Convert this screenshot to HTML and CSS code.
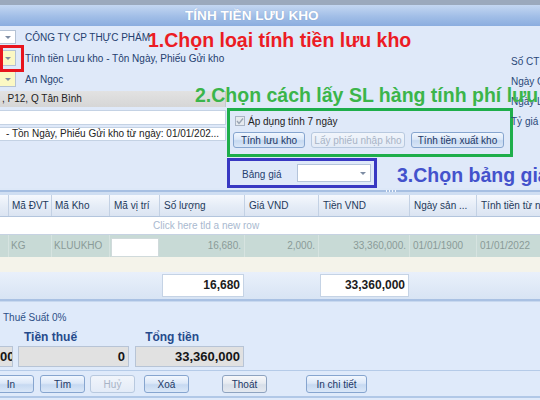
FILE: index.html
```html
<!DOCTYPE html>
<html lang="vi">
<head>
<meta charset="utf-8">
<title>Tính tiền lưu kho</title>
<link rel="stylesheet" href="styles.css">
</head>
<body>
<div class="window">
  <header class="titlebar"><h1>TÍNH TIỀN LƯU KHO</h1></header>

  <section class="form">
    <div class="form-left">
      <div class="lookup lookup-1"><span class="combo combo-white"><i class="caret"></i></span><span class="lookup-text">CÔNG TY CP THỰC PHẨM</span></div>
      <div class="lookup lookup-2"><span class="combo combo-yellow"><i class="caret"></i></span><span class="lookup-text">Tính tiền Lưu kho - Tôn Ngày, Phiếu Gửi kho</span></div>
      <div class="lookup lookup-3"><span class="combo combo-yellow"><i class="caret"></i></span><span class="lookup-text">An Ngọc</span></div>
      <div class="address">, P12, Q Tân Bình</div>
      <div class="textbox tb-1"></div>
      <div class="textbox tb-2">- Tồn Ngày, Phiếu Gửi kho từ ngày: 01/01/202...</div>
    </div>

    <div class="form-mid">
      <div class="box-green">
        <div class="check">
          <span class="checkbox"><svg width="8" height="8" viewBox="0 0 8 8"><polyline points="1,4 3,6.5 7,1.5" fill="none" stroke="#9aa5b4" stroke-width="1.4"/></svg></span>
          <span>Áp dụng tính 7 ngày</span>
        </div>
        <div class="btn-row">
          <button class="btn w-luu">Tính lưu kho</button>
          <button class="btn btn-disabled w-lay">Lấy phiếu nhập kho</button>
          <button class="btn w-xuat">Tính tiền xuất kho</button>
        </div>
      </div>
      <div class="box-blue">
        <span class="price-label">Bảng giá</span>
        <span class="combo-price"><i class="caret"></i></span>
      </div>
    </div>

    <div class="form-right">
      <div class="side-label">Số CT</div>
      <div class="side-label">Ngày CT</div>
      <div class="side-label">Ngày Lập</div>
      <div class="side-label">Tỷ giá</div>
    </div>

    <div class="red-box"></div>
    <div class="note note-red">1.Chọn loại tính tiền lưu kho</div>
    <div class="note note-green">2.Chọn cách lấy SL hàng tính phí lưu kho</div>
    <div class="note note-blue">3.Chọn bảng giá</div>
  </section>

  <div class="splitter"><span class="grip"></span></div>

  <section class="grid">
    <div class="grid-row grid-head">
      <div class="hc"></div>
      <div class="hc">Mã ĐVT</div>
      <div class="hc">Mã Kho</div>
      <div class="hc">Mã vị trí</div>
      <div class="hc">Số lượng</div>
      <div class="hc">Giá VND</div>
      <div class="hc">Tiền VND</div>
      <div class="hc">Ngày sản ...</div>
      <div class="hc">Tính tiền từ ngày</div>
    </div>
    <div class="new-row">Click here tld a new row</div>
    <div class="grid-row data-row">
      <div class="dc"></div>
      <div class="dc">KG</div>
      <div class="dc">KLUUKHO</div>
      <div class="dc dc-white"></div>
      <div class="dc num">16,680.</div>
      <div class="dc num">2,000.</div>
      <div class="dc num">33,360,000.</div>
      <div class="dc date">01/01/1900</div>
      <div class="dc date">01/01/2022</div>
    </div>
    <div class="grid-fill"></div>
  </section>

  <div class="grid-row totals">
    <div></div><div></div><div></div><div></div>
    <div class="tot-box">16,680</div>
    <div></div>
    <div class="tot-box">33,360,000</div>
    <div></div><div></div>
  </div>

  <section class="footer">
    <div class="tax">Thuế Suất 0%</div>
    <div class="sum-labels">
      <span class="sum-label l-thue">Tiền thuế</span>
      <span class="sum-label l-tong">Tổng tiền</span>
    </div>
    <div class="sum-boxes">
      <div class="sum-box s-1">00</div>
      <div class="sum-box s-2">0</div>
      <div class="sum-box s-3">33,360,000</div>
    </div>
    <div class="actions">
      <button class="btn act b-in">In</button>
      <button class="btn act b-tim">Tìm</button>
      <button class="btn act btn-disabled b-huy">Huỷ</button>
      <button class="btn act b-xoa">Xoá</button>
      <button class="btn act btn-gray b-thoat">Thoát</button>
      <button class="btn act b-inct">In chi tiết</button>
    </div>
    <div class="bottom-line"></div>
  </section>
</div>
</body>
</html>
```

FILE: styles.css
```css
* { box-sizing: border-box; }
html, body { margin: 0; padding: 0; }
body {
  width: 540px;
  height: 400px;
  overflow: hidden;
  background: #dfe9f9;
  font-family: "Liberation Sans", Arial, sans-serif;
  font-size: 10px;
  color: #1e1e1e;
}
.window { width: 540px; height: 400px; display: flex; flex-direction: column; overflow: hidden; }

/* title */
.titlebar {
  height: 26px;
  flex: none;
  border-top: 5px solid #9ba9bd;
  background: linear-gradient(#c4d7f2, #a1bee7 55%, #8badDf);
  display: flex;
  align-items: center;
  padding-left: 185px;
}
.titlebar h1 { margin: 0; font-size: 13.6px; font-weight: bold; color: #fff; letter-spacing: 0; text-shadow: 0 0 1px rgba(60,90,140,.35); }

/* form */
.form { position: relative; height: 162px; flex: none; display: flex; }
.form-left { width: 226px; flex: none; display: flex; flex-direction: column; }
.lookup { display: flex; align-items: center; gap: 9px; color: #24406f; }
.lookup-1 { margin-top: 4px; height: 14px; }
.lookup-2 { margin-top: 6px; height: 16px; }
.lookup-3 { margin-top: 5px; height: 16px; }
.lookup-text { white-space: nowrap; }
.combo {
  width: 16px; height: 100%; flex: none;
  display: flex; align-items: center; justify-content: center;
  border: 1px solid #b4c2d4; border-left: none;
  padding-left: 1px;
}
.combo-white { background: #fff; }
.combo-yellow { background: #fbf8c4; }
.caret { display: block; width: 0; height: 0; border-left: 3px solid transparent; border-right: 3px solid transparent; border-top: 3px solid #7d8ca3; }
.address {
  margin-top: 4px; height: 16px; line-height: 16px;
  background: linear-gradient(#e2e2e2, #d6d6d6);
  border-right: 1px solid #c2c8d0;
  padding-left: 2px; color: #222; white-space: nowrap;
}
.textbox { background: #fff; border: 1px solid #c4d2e4; border-left: none; white-space: nowrap; overflow: hidden; color: #222; }
.tb-1 { margin-top: 3px; height: 15px; }
.tb-2 { margin-top: 2px; height: 14px; line-height: 12px; padding-left: 6px; }

.form-mid { width: 286px; flex: none; margin-left: 1px; padding-top: 82px; display: flex; flex-direction: column; }
.box-green { height: 49px; border: 3px solid #1eae4b; padding: 4px 0 0 3px; }
.check { display: flex; align-items: center; height: 12px; margin-left: 2px; gap: 3px; color: #222; }
.checkbox { width: 10px; height: 10px; border: 1px solid #aab5c5; background: #e6eaef; display: flex; align-items: center; justify-content: center; }
.btn-row { display: flex; gap: 6px; margin-top: 5px; }
.btn {
  height: 16px; padding: 0; margin: 0;
  font-family: inherit; font-size: 10px; color: #1d3866;
  border: 1px solid #86a5cf; border-radius: 3px;
  background: linear-gradient(#f2f7fe, #dce8f8 45%, #c6d9f1 55%, #dae7f8);
  white-space: nowrap;
}
.btn-disabled { color: #a8b4c6; border-color: #b8c9df; background: linear-gradient(#f1f5fb, #e3ebf7); }
.btn-gray { border-color: #8ea3c0; background: linear-gradient(#f7f8fa, #e7ebf1 45%, #d8dfe9 55%, #e4e9f0); }
.w-luu { width: 72px; }
.w-lay { width: 94px; }
.w-xuat { width: 93px; }

.box-blue {
  margin-top: 1px; width: 150px; height: 30px;
  border: 3px solid #3838c2;
  display: flex; align-items: center;
  padding-left: 12px;
}
.price-label { color: #24406f; width: 55px; flex: none; padding-top: 3px; }
.combo-price { width: 74px; height: 18px; background: #fff; border: 1px solid #b4c4da; display: flex; align-items: center; justify-content: flex-end; padding-right: 4px; }

.form-right { margin-left: -2px; padding-top: 26px; white-space: nowrap; }
.side-label { height: 20px; line-height: 20px; color: #2a4878; }
.side-label:last-child { height: 19px; line-height: 19px; }

.note { position: absolute; font-size: 19.5px; font-weight: bold; white-space: nowrap; line-height: 22px; }
.note-red { left: 148px; top: 3px; color: #ec1c24; }
.note-green { left: 195px; top: 58px; color: #3bb54a; }
.note-blue { left: 397px; top: 138px; color: #4352cc; }
.red-box { position: absolute; left: 0; top: 19px; width: 24px; height: 27px; border: 3px solid #e8141c; }

/* splitter */
.splitter {
  height: 7px; flex: none;
  background: linear-gradient(#dde8f8 0 2px, #a6bfe2 2px 4px, #cfdef2 4px);
  display: flex; align-items: flex-start;
}
.grip { margin-left: 386px; margin-top: 2px; width: 11px; height: 2px; background: repeating-linear-gradient(90deg, #f4f8fe 0 1px, transparent 1px 3px); }

/* grid */
.grid { flex: none; background: #f4f3ea; overflow: hidden; }
.grid-row { display: grid; grid-template-columns: 9px 43px 58px 50px 85px 74px 91px 67px 120px; }
.grid-head { height: 22px; background: linear-gradient(#f5f8fd, #e6edf7 50%, #dbe4f2); border-bottom: 1px solid #b3c5dd; }
.hc { border-right: 1px solid #c3d1e4; padding-left: 4px; line-height: 21px; color: #23395a; white-space: nowrap; overflow: hidden; }
.hc:nth-child(2), .hc:nth-child(3) { padding-left: 3px; }
.new-row { height: 18px; line-height: 18px; background: #fff; color: #a9b9cf; padding-left: 153px; border-bottom: 1px solid #c6d2e2; }
.data-row { height: 22px; background: #c8dad6; }
.dc { border-right: 1px solid #d6e3e0; line-height: 22px; color: #8a9a98; padding-left: 2px; white-space: nowrap; overflow: hidden; }
.dc-white { background: #fff; margin: 3px 1px 0 1px; border: 1px solid #d0dadb; }
.num { text-align: right; padding-right: 3px; }
.date { padding-left: 3px; }
.grid-fill { height: 15px; background: #f4f3ea; }

/* totals */
.totals { flex: none; height: 27px; background: linear-gradient(#e9f0fb, #d8e4f4); align-items: center; }
.tot-box {
  height: 23px; margin: 0 1px 0 2px;
  background: #fff; border: 1px solid #c5d3e5;
  text-align: right; line-height: 21px; padding-right: 3px;
  font-size: 12px; font-weight: bold; color: #1c1c1c;
}
.totals .tot-box:nth-child(7) { margin: 0 1px 0 1px; }

/* footer */
.footer { flex: 1; border-top: 2px solid #a9c1e3; box-shadow: inset 0 1px 0 #c7d8ef; background: #dfeafa; display: flex; flex-direction: column; }
.tax { height: 29px; padding: 11px 0 0 3px; line-height: 12px; color: #2d4f86; }
.sum-labels { height: 15px; display: flex; line-height: 15px; }
.sum-label { font-size: 12px; font-weight: bold; color: #264b8c; white-space: nowrap; }
.l-thue { margin-left: 24px; }
.l-tong { margin-left: 68px; }
.sum-boxes { display: flex; margin-top: 1px; height: 21px; }
.sum-box {
  background: #e1e1e1; border: 1px solid #b7c4d6;
  text-align: right; line-height: 19px; padding-right: 3px;
  font-size: 13px; font-weight: bold; color: #151515; white-space: nowrap;
}
.s-1 { width: 13px; border-left: none; padding-right: 2px; overflow: hidden; }
.s-2 { width: 111px; margin-left: 5px; }
.s-3 { width: 109px; margin-left: 6px; }
.actions { margin-top: 3px; padding-top: 4px; border-top: 1px solid #b5cbe8; display: flex; height: 26px; align-items: flex-start; }
.act { height: 18px; width: 45px; }
.b-in { margin-left: -12px; width: 46px; }
.b-tim { margin-left: 6px; }
.b-huy { margin-left: 5px; }
.b-xoa { margin-left: 9px; }
.b-thoat { margin-left: 33px; }
.b-inct { margin-left: 39px; width: 61px; }
.bottom-line { height: 2px; background: #b1c8e7; }
```
